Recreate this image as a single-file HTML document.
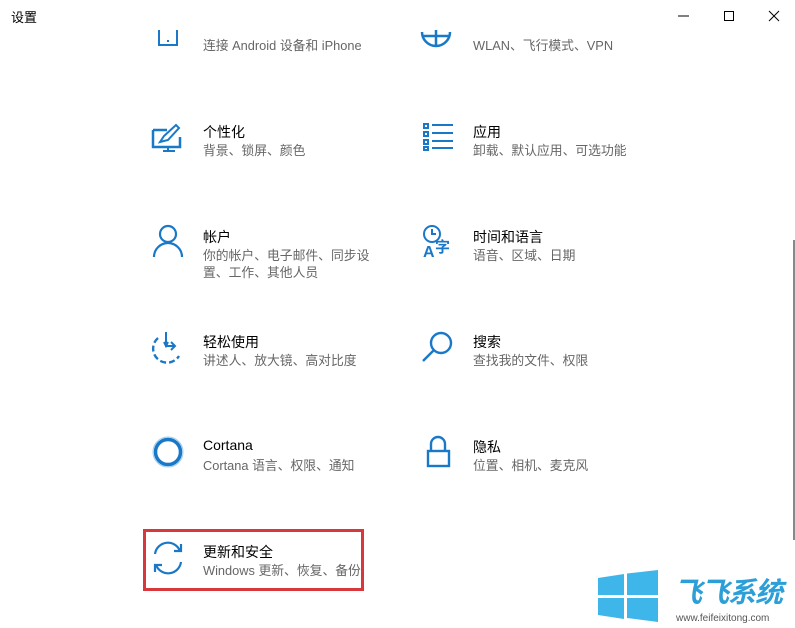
<!DOCTYPE html>
<html><head><meta charset="utf-8"><style>
body{margin:0;width:795px;height:628px;background:#fff;overflow:hidden;position:relative;font-family:"Liberation Sans","Noto Sans CJK SC",sans-serif}
.t{position:absolute;font-size:14px;color:#000;white-space:nowrap}
.s{position:absolute;font-size:12.8px;color:#666;white-space:nowrap;line-height:17px}
svg{position:absolute}
</style></head><body>
<div class="t" style="left:11px;top:7px;font-size:13px">设置</div>
<svg style="left:670px;top:8px" width="120" height="16"><path d="M8 8h11" stroke="#000" stroke-width="1"/><rect x="54.5" y="3.5" width="9" height="9" fill="none" stroke="#000"/><path d="M99 3l10 10M109 3l-10 10" stroke="#000"/></svg>
<div style="position:absolute;left:793px;top:240px;width:2px;height:300px;background:#888"></div>

<svg style="left:150px;top:28px" width="40" height="22"><path d="M9 2v15h18V2" fill="none" stroke="#1a78c8" stroke-width="2"/><rect x="17" y="12" width="2" height="2" fill="#1a78c8"/></svg>
<div class="s" style="left:203px;top:37px">连接 Android 设备和 iPhone</div>
<svg style="left:418px;top:28px" width="40" height="22"><path d="M4 4a14 14 0 0 0 28 0M4 8h28M18 2v15" fill="none" stroke="#1a78c8" stroke-width="2.5"/></svg>
<div class="s" style="left:473px;top:37px">WLAN、飞行模式、VPN</div>

<svg style="left:150px;top:122px" width="36" height="32"><path d="M3 8h14M3 8v17h27v-10" fill="none" stroke="#1a78c8" stroke-width="2.5"/><path d="M13 29h12M18 25v4" stroke="#1a78c8" stroke-width="2"/><path d="M10 20l4-6 12-11 3 3-11 12z" fill="none" stroke="#1a78c8" stroke-width="2"/></svg>
<div class="t" style="left:203px;top:122px">个性化</div>
<div class="s" style="left:203px;top:142px">背景、锁屏、颜色</div>
<svg style="left:420px;top:122px" width="36" height="30"><g fill="none" stroke="#1a78c8" stroke-width="2"><rect x="4" y="2" width="4" height="4"/><rect x="4" y="10" width="4" height="4"/><rect x="4" y="18" width="4" height="4"/><rect x="4" y="25" width="4" height="3"/></g><path d="M12 3h21M12 11h21M12 19h21M12 26h21" stroke="#1a78c8" stroke-width="2"/></svg>
<div class="t" style="left:473px;top:122px">应用</div>
<div class="s" style="left:473px;top:142px">卸载、默认应用、可选功能</div>

<svg style="left:150px;top:224px" width="36" height="34"><circle cx="18" cy="10" r="8" fill="none" stroke="#1a78c8" stroke-width="2.2"/><path d="M4 33a14 14 0 0 1 28 0" fill="none" stroke="#1a78c8" stroke-width="2.2"/></svg>
<div class="t" style="left:203px;top:227px">帐户</div>
<div class="s" style="left:203px;top:247px">你的帐户、电子邮件、同步设<br>置、工作、其他人员</div>
<svg style="left:420px;top:224px" width="40" height="34"><circle cx="12" cy="10" r="8" fill="none" stroke="#1a78c8" stroke-width="2"/><path d="M12 5v5h4" fill="none" stroke="#1a78c8" stroke-width="2"/><text x="3" y="33" font-size="16" font-weight="bold" fill="#1a78c8" font-family="Liberation Sans">A</text><text x="15" y="28" font-size="15" font-weight="bold" fill="#1a78c8" font-family="Noto Sans CJK SC">字</text></svg>
<div class="t" style="left:473px;top:227px">时间和语言</div>
<div class="s" style="left:473px;top:247px">语音、区域、日期</div>

<svg style="left:150px;top:330px" width="40" height="34"><path d="M8 8a14 14 0 1 0 21 18" fill="none" stroke="#1a78c8" stroke-width="2.4" stroke-dasharray="6 3"/><path d="M16 2v14h9M21 12l4 4-4 4M18 12l-2 4-2-4" fill="none" stroke="#1a78c8" stroke-width="2"/></svg>
<div class="t" style="left:203px;top:332px">轻松使用</div>
<div class="s" style="left:203px;top:352px">讲述人、放大镜、高对比度</div>
<svg style="left:420px;top:330px" width="36" height="34"><circle cx="21" cy="13" r="10" fill="none" stroke="#1a78c8" stroke-width="2.4"/><path d="M14 20L3 31" stroke="#1a78c8" stroke-width="2.4"/></svg>
<div class="t" style="left:473px;top:332px">搜索</div>
<div class="s" style="left:473px;top:352px">查找我的文件、权限</div>

<svg style="left:150px;top:434px" width="36" height="36"><circle cx="18" cy="18" r="12.5" fill="none" stroke="#1a78c8" stroke-width="3.5"/><circle cx="18" cy="18" r="15" fill="none" stroke="#9fcdf0" stroke-width="1"/></svg>
<div class="t" style="left:203px;top:437px">Cortana</div>
<div class="s" style="left:203px;top:457px">Cortana 语言、权限、通知</div>
<svg style="left:420px;top:434px" width="36" height="36"><path d="M11 16v-6a7 7 0 0 1 14 0v6" fill="none" stroke="#1a78c8" stroke-width="2.4"/><rect x="8" y="17" width="21" height="15" fill="none" stroke="#1a78c8" stroke-width="2.4"/></svg>
<div class="t" style="left:473px;top:437px">隐私</div>
<div class="s" style="left:473px;top:457px">位置、相机、麦克风</div>

<div style="position:absolute;left:143px;top:529px;width:215px;height:56px;border:3px solid #d8373c"></div>
<svg style="left:150px;top:540px" width="36" height="36"><path d="M5 14a13 13 0 0 1 25-3M31 22a13 13 0 0 1-25 3" fill="none" stroke="#1a78c8" stroke-width="2.2"/><path d="M24 11h7V4M12 25H5v7" fill="none" stroke="#1a78c8" stroke-width="2.2"/></svg>
<div class="t" style="left:203px;top:542px">更新和安全</div>
<div class="s" style="left:203px;top:562px">Windows 更新、恢复、备份</div>

<svg style="left:596px;top:570px" width="64" height="52"><path d="M2 8l26-4v21H2zM31 3.5L62 0v25H31zM2 28h26v21L2 45zM31 28h31v24l-31-4z" fill="#3fb6ea"/></svg>
<div style="position:absolute;left:674px;top:574px;font-size:28px;font-weight:bold;font-style:italic;color:#2c9fd9;font-family:'Noto Sans CJK SC',sans-serif;line-height:34px;letter-spacing:-1px">飞飞系统</div>
<div style="position:absolute;left:676px;top:613px;font-size:10px;color:#555">www.feifeixitong.com</div>
</body></html>
